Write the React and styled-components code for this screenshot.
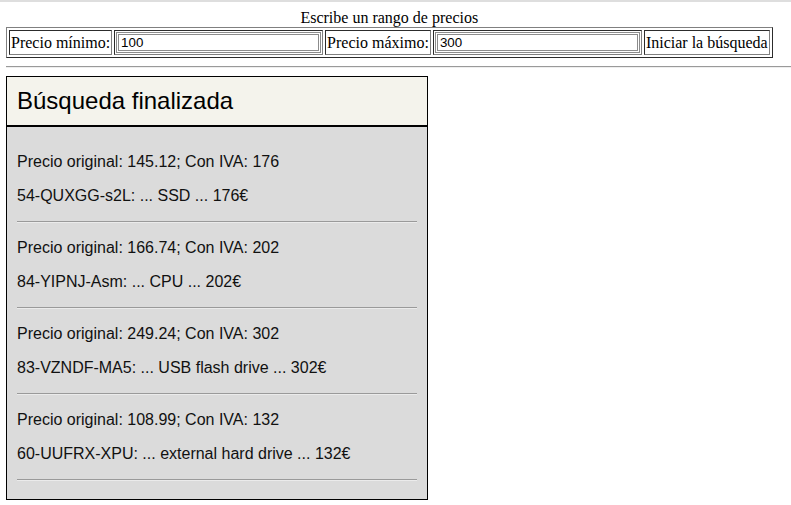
import styled, { createGlobalStyle } from "styled-components";

const GlobalStyle = createGlobalStyle`
  html, body {
    margin: 0;
    padding: 0;
    background: #fff;
  }
  body {
    font-family: "Liberation Serif", "Times New Roman", serif;
    font-size: 16px;
    color: #000;
  }
`;

const resultados = [
  { original: "145.12", iva: "176", codigo: "54-QUXGG-s2L", producto: "SSD" },
  { original: "166.74", iva: "202", codigo: "84-YIPNJ-Asm", producto: "CPU" },
  { original: "249.24", iva: "302", codigo: "83-VZNDF-MA5", producto: "USB flash drive" },
  { original: "108.99", iva: "132", codigo: "60-UUFRX-XPU", producto: "external hard drive" },
];

const App = () => {
  return (
    <>
      <GlobalStyle />
      <Page>
        <SearchTable>
          <caption>Escribe un rango de precios</caption>
          <tbody>
            <tr>
              <Cell>Precio mínimo:</Cell>
              <Cell>
                <PriceInput type="text" defaultValue="100" />
              </Cell>
              <Cell>Precio máximo:</Cell>
              <Cell>
                <PriceInput type="text" defaultValue="300" />
              </Cell>
              <Cell>Iniciar la búsqueda</Cell>
            </tr>
          </tbody>
        </SearchTable>
        <Rule />
        <Panel>
          <PanelHeader>
            <h2>Búsqueda finalizada</h2>
          </PanelHeader>
          <PanelBody>
            {resultados.map((r) => (
              <div key={r.codigo}>
                <p>
                  Precio original: {r.original}; Con IVA: {r.iva}
                </p>
                <p>
                  {r.codigo}: ... {r.producto} ... {r.iva}€
                </p>
                <ItemRule />
              </div>
            ))}
          </PanelBody>
        </Panel>
      </Page>
    </>
  );
};

export default App;

const Page = styled.div`
  border-top: 2px solid #dedede;
  padding: 6px 0 6px 6px;
`;

const SearchTable = styled.table`
  width: 765px;
  border: 1px outset #808080;
  border-spacing: 2px;
  caption {
    line-height: 19px;
  }
`;

const Cell = styled.td`
  border: 1px inset #808080;
  padding: 1px;
  white-space: nowrap;
  line-height: 19px;
`;

const PriceInput = styled.input`
  box-sizing: border-box;
  width: 205px;
  height: 21px;
  font-family: "Liberation Sans", Arial, sans-serif;
  font-size: 13.33px;
  padding: 0 2px;
  border: 3px double #8c8c8c;
  background: #fff;
  color: #000;
  display: block;
  outline: none;
`;

const Rule = styled.hr`
  margin: 8px 0;
  border: 0;
  border-top: 1px solid #9a9a9a;
  border-bottom: 1px solid #eeeeee;
`;

const Panel = styled.div`
  width: 420px;
  border: 1px solid #000;
  font-family: "Liberation Sans", Arial, sans-serif;
  color: #111;
`;

const PanelHeader = styled.div`
  background: #f4f3ec;
  padding: 10px;
  border-bottom: 2px solid #000;
  h2 {
    margin: 0;
    font-size: 24px;
    font-weight: normal;
    line-height: 28px;
    color: #000;
  }
`;

const PanelBody = styled.div`
  background: #dbdbdb;
  padding: 10px;
  font-size: 16px;
  p {
    margin: 16px 0;
    line-height: 18px;
  }
`;

const ItemRule = styled.hr`
  margin: 8px 0;
  border: 0;
  border-top: 1px solid #9a9a9a;
  border-bottom: 1px solid #ebebeb;
`;
